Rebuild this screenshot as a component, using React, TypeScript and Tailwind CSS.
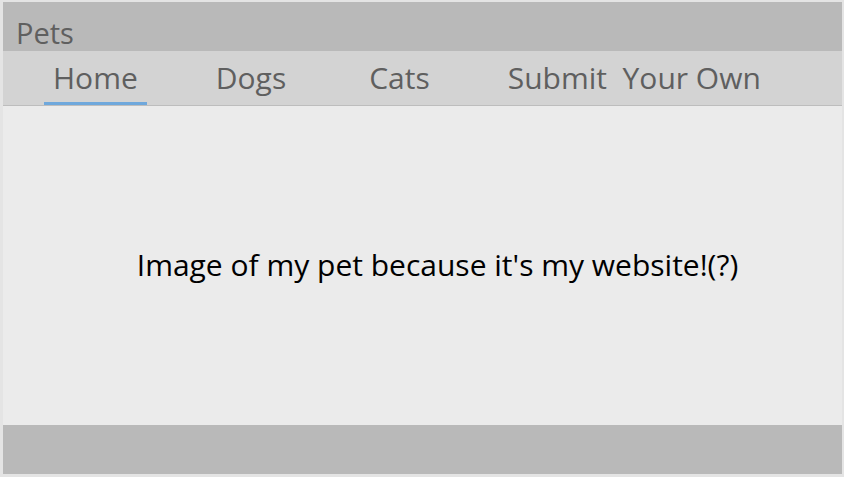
import React from 'react';

const tabs = [
  { label: 'Home', active: true, gap: 'ml-[41px]' },
  { label: 'Dogs', active: false, gap: 'ml-[60px]' },
  { label: 'Cats', active: false, gap: 'ml-[65px]' },
  { label: 'Submit  Your Own', active: false, gap: 'ml-[60px]' },
];

export default function App() {
  return (
    <div
      className="h-[477px] w-[844px] bg-[#e4e4e4] pt-[2px] pl-[3px] pr-[2px] pb-[3px]"
      style={{ fontFamily: '"Open Sans", sans-serif' }}
    >
      <div className="flex h-full flex-col">
        {/* Title bar */}
        <header className="flex h-[49px] items-end bg-[#b9b9b9] pl-[13px]">
          <span className="text-[29px] leading-[37px] text-[#5f5f5f]">Pets</span>
        </header>

        {/* Nav */}
        <nav className="flex h-[55px] items-stretch border-b border-[#bdbdbd] bg-[#d3d3d3]">
          {tabs.map((tab) => (
            <div
              key={tab.label}
              className={`${tab.gap} flex items-center px-[9px] border-b-[3px] ${
                tab.active ? 'border-[#6fa8dc]' : 'border-transparent'
              }`}
            >
              <span className="whitespace-pre text-[30px] leading-none text-[#5f5f5f] mt-[2px]">
                {tab.label}
              </span>
            </div>
          ))}
        </nav>

        {/* Content */}
        <main className="flex flex-1 items-center justify-center bg-[#ebebeb]">
          <p className="text-[30px] text-black pl-[30px] pb-[3px]">
            Image of my pet because it's my website!(?)
          </p>
        </main>

        {/* Footer */}
        <footer className="h-[49px] bg-[#b9b9b9]" />
      </div>
    </div>
  );
}
